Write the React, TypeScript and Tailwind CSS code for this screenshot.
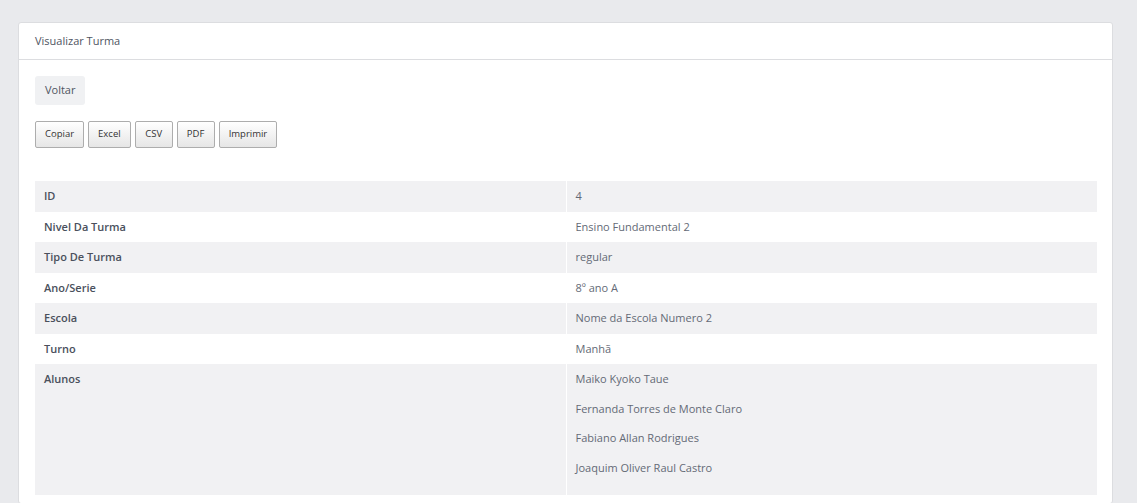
import React from "react";

const rows: { label: string; value: string | string[] }[] = [
  { label: "ID", value: "4" },
  { label: "Nivel Da Turma", value: "Ensino Fundamental 2" },
  { label: "Tipo De Turma", value: "regular" },
  { label: "Ano/Serie", value: "8º ano A" },
  { label: "Escola", value: "Nome da Escola Numero 2" },
  { label: "Turno", value: "Manhã" },
  {
    label: "Alunos",
    value: [
      "Maiko Kyoko Taue",
      "Fernanda Torres de Monte Claro",
      "Fabiano Allan Rodrigues",
      "Joaquim Oliver Raul Castro",
    ],
  },
];

const exportButtons = ["Copiar", "Excel", "CSV", "PDF", "Imprimir"];

export default function App() {
  return (
    <div className="min-h-[503px] bg-[#e9eaed] pl-[18px] pr-[24px] pt-[22px] font-['Open_Sans',sans-serif] text-[#5c6270]">
      <div className="rounded-[3px] border border-[#dcdde0] bg-white">
        <div className="flex h-[37px] items-center border-b border-[#dcdde0] px-[16px] text-[11px] text-[#4f5562]">
          Visualizar Turma
        </div>
        <div className="pl-[16px] pr-[15px] pt-[16px] pb-2">
          <button
            type="button"
            className="h-[29px] rounded-[3px] bg-[#f0f1f3] px-[10px] text-[11px] text-[#4f5562]"
          >
            Voltar
          </button>
          <div className="mt-[16px] flex gap-[4px]">
            {exportButtons.map((b) => (
              <button
                key={b}
                type="button"
                className="h-[27px] min-w-[38px] rounded-[2px] border border-[#adadad] bg-gradient-to-b from-white to-[#e6e6e6] px-[9px] text-[9.5px] text-[#333]"
              >
                {b}
              </button>
            ))}
          </div>
          <table className="mt-[33px] w-full table-fixed border-collapse text-[11px]">
            <tbody>
              {rows.map((r, i) => (
                <tr key={r.label} className={i % 2 === 0 ? "bg-[#f1f1f3]" : "bg-white"}>
                  <td className="h-[30.5px] w-1/2 border-r border-white px-[9px] align-top pt-[7px] font-semibold text-[#4a505c]">
                    {r.label}
                  </td>
                  <td className="px-[9px] align-top pt-[7px] pb-[7px] text-[#646a76]">
                    {Array.isArray(r.value) ? (
                      <div className="flex flex-col gap-[14px] pb-[13px]">
                        {r.value.map((v) => (
                          <div key={v} className="leading-[15.5px]">{v}</div>
                        ))}
                      </div>
                    ) : (
                      r.value
                    )}
                  </td>
                </tr>
              ))}
            </tbody>
          </table>
        </div>
      </div>
    </div>
  );
}
